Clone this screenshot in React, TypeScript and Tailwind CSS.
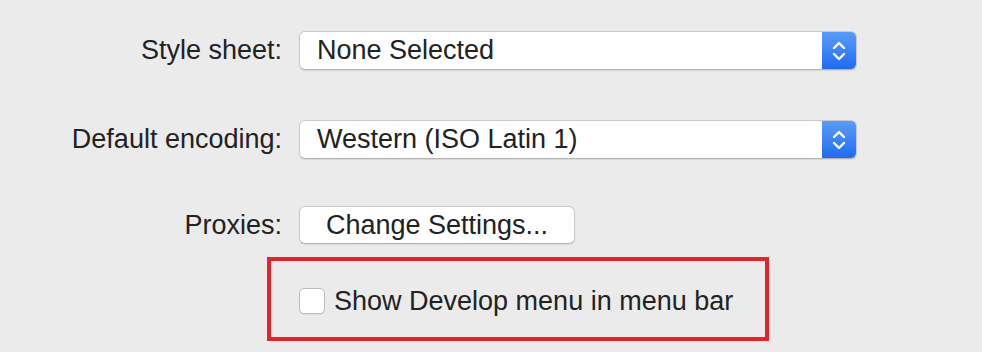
import React from "react";

function Chevrons() {
  return (
    <svg width="16" height="24" viewBox="0 0 16 24" fill="none" stroke="white" strokeWidth="2.4" strokeLinecap="round" strokeLinejoin="round">
      <path d="M3 9 L8 4 L13 9" />
      <path d="M3 15 L8 20 L13 15" />
    </svg>
  );
}

function Popup({ value }: { value: string }) {
  return (
    <div className="flex h-[39px] w-[558px] items-stretch rounded-[6px] border border-[#c9c9c9] border-b-[#b4b4b4] bg-white shadow-[0_1px_1px_rgba(0,0,0,0.08)] overflow-hidden">
      <div className="flex flex-1 items-center pl-[17px] text-[27px] text-[#222]">{value}</div>
      <div className="flex w-[34px] items-center justify-center bg-gradient-to-b from-[#5a9bf8] to-[#1f6bf2]">
        <Chevrons />
      </div>
    </div>
  );
}

export default function App() {
  return (
    <div
      className="h-[352px] w-[982px] bg-[#ebebeb] pt-[31px] text-[#222]"
      style={{ fontFamily: '"Liberation Sans", Arial, sans-serif' }}
    >
      <div className="grid grid-cols-[282px_auto] items-center gap-x-[17px] text-[27px]">
        <div className="text-right leading-none">Style sheet:</div>
        <Popup value="None Selected" />
        <div className="h-[50px] col-span-2" />
        <div className="text-right leading-none">Default encoding:</div>
        <Popup value="Western (ISO Latin 1)" />
        <div className="h-[47px] col-span-2" />
        <div className="text-right leading-none">Proxies:</div>
        <div>
          <div className="flex h-[38px] w-[276px] items-center justify-center rounded-[6px] border border-[#c9c9c9] border-b-[#b4b4b4] bg-white shadow-[0_1px_1px_rgba(0,0,0,0.08)] text-[27px]">
            Change Settings...
          </div>
        </div>
      </div>
      <div className="ml-[267px] mt-[13px] flex h-[84px] w-[502px] items-center border-[4px] border-[#e3232b] pl-[28px] pt-[4px]">
        <div className="h-[26px] w-[26px] rounded-[5px] border border-[#bdbdbd] bg-white shadow-[0_1px_1px_rgba(0,0,0,0.06)]" />
        <span className="ml-[9px] text-[27px] leading-none">Show Develop menu in menu bar</span>
      </div>
    </div>
  );
}
